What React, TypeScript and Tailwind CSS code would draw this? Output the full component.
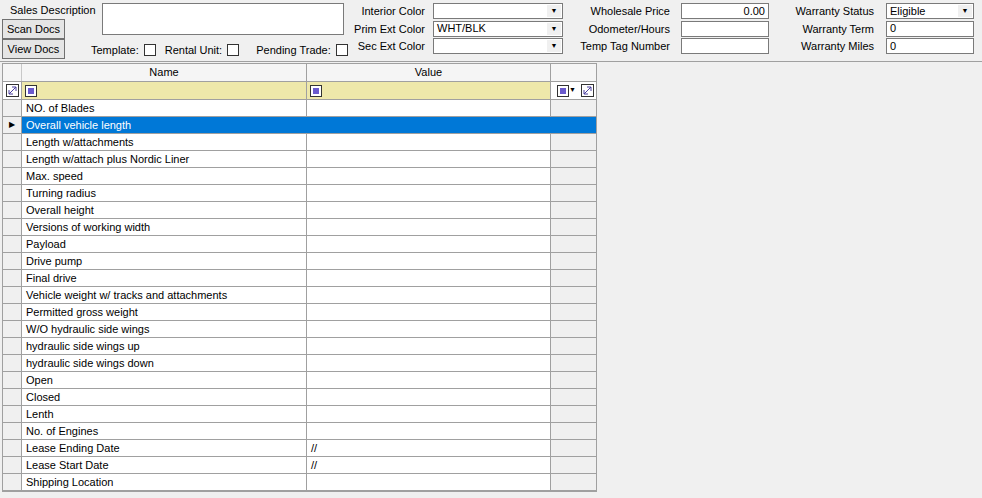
import React from 'react';

const rows = [
  ['NO. of Blades', ''],
  ['Overall vehicle length', ''],
  ['Length w/attachments', ''],
  ['Length w/attach plus Nordic Liner', ''],
  ['Max. speed', ''],
  ['Turning radius', ''],
  ['Overall height', ''],
  ['Versions of working width', ''],
  ['Payload', ''],
  ['Drive pump', ''],
  ['Final drive', ''],
  ['Vehicle weight w/ tracks and attachments', ''],
  ['Permitted gross weight', ''],
  ['W/O hydraulic side wings', ''],
  ['hydraulic side wings up', ''],
  ['hydraulic side wings down', ''],
  ['Open', ''],
  ['Closed', ''],
  ['Lenth', ''],
  ['No. of Engines', ''],
  ['Lease Ending Date', '//'],
  ['Lease Start Date', '//'],
  ['Shipping Location', ''],
];

function Arrow() {
  return <span className="mr-[1px] flex h-[12px] w-[14px] shrink-0 items-center justify-center bg-[#f0f0f0] text-[7px]">▼</span>;
}

function Combo({ value, w }: { value?: string; w: string }) {
  return (
    <div className={`flex h-[16px] ${w} shrink-0 items-center border border-[#7a7a7a] bg-white pl-[3px]`}>
      <span className="flex-1 leading-none">{value}</span>
      <Arrow />
    </div>
  );
}

function Box({ value, right }: { value?: string; right?: boolean }) {
  return (
    <div className={`flex h-[16px] w-[88px] shrink-0 items-center border border-[#7a7a7a] bg-white px-[3px] leading-none ${right ? 'justify-end' : ''}`}>
      {value}
    </div>
  );
}

function Check() {
  return <span className="inline-block h-[12px] w-[12px] shrink-0 border border-[#333] bg-white" />;
}

function Btn({ label }: { label: string }) {
  return (
    <div className="flex h-[20px] w-[63px] items-center justify-center border border-[#707070] bg-[#e5e5e5]">{label}</div>
  );
}

function FilterIcon() {
  return (
    <span className="inline-flex h-[12px] w-[12px] items-center justify-center border border-[#333] bg-white">
      <span className="h-[6px] w-[6px] bg-[#6a5acd]" />
    </span>
  );
}

function ClearIcon() {
  return (
    <svg width="13" height="13" viewBox="0 0 13 13">
      <rect x="0.5" y="0.5" width="12" height="12" fill="#fff" stroke="#333" />
      <path d="M3 10 L10 3 M6 3 H10 V7 M3 6 V10 H7" stroke="#4b3f9e" fill="none" />
    </svg>
  );
}

export default function App() {
  return (
    <div className="h-[498px] w-[982px] overflow-hidden whitespace-nowrap bg-[#f0f0f0] text-[11px] text-black" style={{ fontFamily: '"Liberation Sans", Arial, sans-serif' }}>
      <div className="flex h-[62px] border-b border-[#a0a0a0]">
        <div className="flex w-[100px] shrink-0 flex-col pl-[2px] pt-[3px]">
          <div className="h-[16px] pl-[8px] leading-[15px]">Sales Description</div>
          <Btn label="Scan Docs" />
          <Btn label="View Docs" />
        </div>
        <div className="ml-[2px] flex w-[242px] shrink-0 flex-col pt-[3px]">
          <div className="h-[32px] w-[242px] border border-[#7a7a7a] bg-white" />
          <div className="ml-[-11px] mt-[7px] flex items-center gap-[5px]">
            <span>Template:</span><Check />
            <span className="ml-[4px]">Rental Unit:</span><Check />
            <span className="ml-[12px]">Pending Trade:</span><Check />
          </div>
        </div>
        <div className="flex shrink-0 flex-col gap-[1px] pt-[3px]">
          {[['Interior Color', ''], ['Prim Ext Color', 'WHT/BLK'], ['Sec Ext Color', '']].map(([l, v]) => (
            <div key={l} className="flex items-center">
              <span className="w-[81px] text-right">{l}</span>
              <span className="ml-[8px]"><Combo value={v} w="w-[130px]" /></span>
            </div>
          ))}
        </div>
        <div className="flex shrink-0 flex-col gap-[1px] pt-[3px]">
          {[['Wholesale Price', '0.00'], ['Odometer/Hours', ''], ['Temp Tag Number', '']].map(([l, v]) => (
            <div key={l} className="flex items-center">
              <span className="w-[107px] text-right">{l}</span>
              <span className="ml-[11px]"><Box value={v} right /></span>
            </div>
          ))}
        </div>
        <div className="flex shrink-0 flex-col gap-[1px] pt-[3px]">
          {[['Warranty Status', 'Eligible'], ['Warranty Term', '0'], ['Warranty Miles', '0']].map(([l, v], i) => (
            <div key={l} className="flex items-center">
              <span className="w-[105px] text-right">{l}</span>
              <span className="ml-[12px]">
                {i === 0 ? <Combo value={v} w="w-[88px]" /> : <Box value={v} />}
              </span>
            </div>
          ))}
        </div>
      </div>

      <div className="ml-[2px] mt-[1px] w-[595px] border border-[#a0a0a0] bg-white">
        <div className="flex h-[18px] border-b border-[#a0a0a0] bg-[#f5f5f5]">
          <div className="w-[19px] border-r border-[#c8c8c8]" />
          <div className="flex w-[285px] items-center justify-center border-r border-[#a0a0a0]">Name</div>
          <div className="flex w-[244px] items-center justify-center border-r border-[#a0a0a0]">Value</div>
          <div className="flex-1" />
        </div>
        <div className="flex h-[18px] border-b border-[#a0a0a0] bg-[#eee8aa]">
          <div className="flex w-[19px] items-center justify-center border-r border-[#a0a0a0] bg-white"><ClearIcon /></div>
          <div className="flex w-[285px] items-center border-r border-[#a0a0a0] pl-[3px]"><FilterIcon /></div>
          <div className="flex w-[244px] items-center border-r border-[#a0a0a0] pl-[3px]"><FilterIcon /></div>
          <div className="flex flex-1 items-center justify-end gap-[5px] bg-white pr-[2px]">
            <span className="flex items-center"><FilterIcon /><span className="text-[7px]">▼</span></span>
            <ClearIcon />
          </div>
        </div>
        {rows.map(([n, v], i) => {
          const sel = i === 1;
          return (
            <div key={n} className={`flex h-[17px] border-b border-[#a0a0a0] ${sel ? 'bg-[#0078d7] text-white' : ''}`}>
              <div className="flex w-[19px] items-center justify-center border-r border-[#a0a0a0] bg-[#f0f0f0] text-[8px] text-black">{sel ? '▶' : ''}</div>
              <div className={`flex w-[285px] items-center pl-[4px] ${sel ? '' : 'border-r border-[#a0a0a0]'}`}>{n}</div>
              <div className={`flex w-[244px] items-center pl-[4px] ${sel ? '' : 'border-r border-[#a0a0a0]'}`}>{v}</div>
              <div className={`flex-1 ${sel ? '' : 'bg-[#f0f0f0]'}`} />
            </div>
          );
        })}
      </div>
    </div>
  );
}
